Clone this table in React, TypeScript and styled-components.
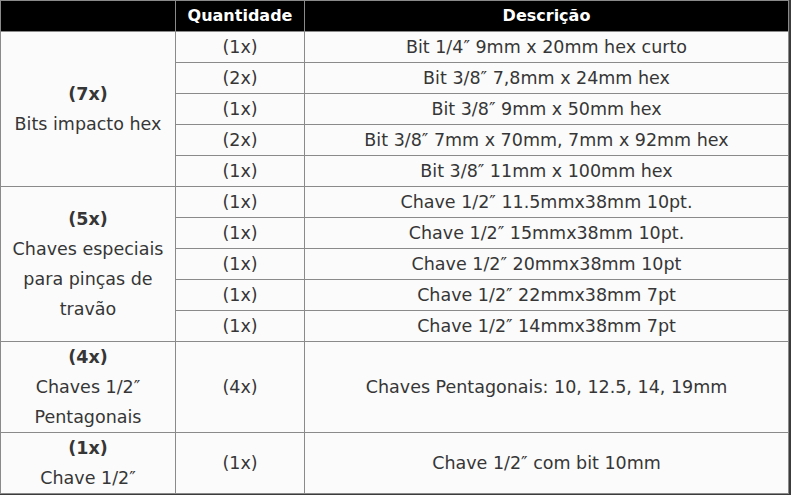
import styled, { createGlobalStyle } from 'styled-components';

const GlobalStyle = createGlobalStyle`
    html, body {
        margin: 0;
        padding: 0;
        background: #fff;
    }
    body {
        font-family: 'DejaVu Sans', 'Liberation Sans', sans-serif;
    }
`;

const Frame = styled.div`
    width: 789px;
    border-right: 2px solid #3c3c3c;
    border-bottom: 2px solid #3c3c3c;
`;

const Table = styled.table`
    width: 100%;
    border-collapse: collapse;
    table-layout: fixed;
    background-color: #fbfbfb;
    color: #363636;
    font-size: 17.5px;
`;

const HeadCell = styled.th`
    background-color: #000;
    color: #fff;
    font-weight: 700;
    font-size: 16px;
    height: 30px;
    padding: 0;
    border: 1px solid #8a8a8a;
    text-align: center;
    line-height: 30px;
`;

const Cell = styled.td`
    border: 1px solid #8a8a8a;
    height: 30px;
    padding: 0 4px;
    line-height: 30px;
    text-align: center;
    vertical-align: middle;
`;

const Count = styled.strong`
    font-weight: 700;
    display: block;
`;

const LabelLine = styled.span`
    display: block;
    white-space: nowrap;
`;

type Group = {
    count: string;
    label: string[];
    items: [string, string][];
};

const groups: Group[] = [
    {
        count: '(7x)',
        label: ['Bits impacto hex'],
        items: [
            ['(1x)', 'Bit 1/4″ 9mm x 20mm hex curto'],
            ['(2x)', 'Bit 3/8″ 7,8mm x 24mm hex'],
            ['(1x)', 'Bit 3/8″ 9mm x 50mm hex'],
            ['(2x)', 'Bit 3/8″ 7mm x 70mm, 7mm x 92mm hex'],
            ['(1x)', 'Bit 3/8″ 11mm x 100mm hex'],
        ],
    },
    {
        count: '(5x)',
        label: ['Chaves especiais', 'para pinças de', 'travão'],
        items: [
            ['(1x)', 'Chave 1/2″ 11.5mmx38mm 10pt.'],
            ['(1x)', 'Chave 1/2″ 15mmx38mm 10pt.'],
            ['(1x)', 'Chave 1/2″ 20mmx38mm 10pt'],
            ['(1x)', 'Chave 1/2″ 22mmx38mm 7pt'],
            ['(1x)', 'Chave 1/2″ 14mmx38mm 7pt'],
        ],
    },
    {
        count: '(4x)',
        label: ['Chaves 1/2″', 'Pentagonais'],
        items: [['(4x)', 'Chaves Pentagonais: 10, 12.5, 14, 19mm']],
    },
    {
        count: '(1x)',
        label: ['Chave 1/2″'],
        items: [['(1x)', 'Chave 1/2″ com bit 10mm']],
    },
];

export default function App() {
    return (
        <>
            <GlobalStyle />
            <Frame>
                <Table>
                    <colgroup>
                        <col style={{ width: 175 }} />
                        <col style={{ width: 129 }} />
                        <col />
                    </colgroup>
                    <thead>
                        <tr>
                            <HeadCell></HeadCell>
                            <HeadCell>Quantidade</HeadCell>
                            <HeadCell>Descrição</HeadCell>
                        </tr>
                    </thead>
                    <tbody>
                        {groups.map(group =>
                            group.items.map(([qty, desc], i) => (
                                <tr key={group.count + group.label[0] + i}>
                                    {i === 0 && (
                                        <Cell rowSpan={group.items.length}>
                                            <Count>{group.count}</Count>
                                            {group.label.map(line => (
                                                <LabelLine key={line}>{line}</LabelLine>
                                            ))}
                                        </Cell>
                                    )}
                                    <Cell>{qty}</Cell>
                                    <Cell>{desc}</Cell>
                                </tr>
                            ))
                        )}
                    </tbody>
                </Table>
            </Frame>
        </>
    );
}
